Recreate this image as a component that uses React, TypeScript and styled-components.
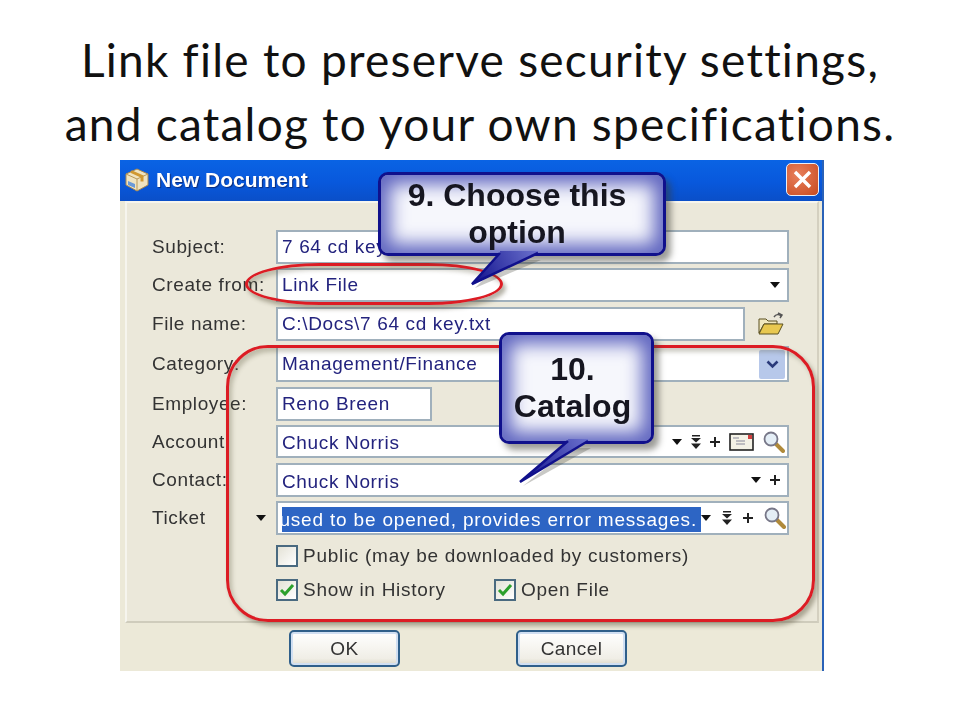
import React from "react";
import styled, { createGlobalStyle } from "styled-components";

const Global = createGlobalStyle`
  html, body { margin: 0; padding: 0; background: #fff; }
  body { width: 960px; height: 720px; overflow: hidden; font-family: "Liberation Sans", Arial, sans-serif; }
`;
const Heading = styled.h1`
  margin: 0; height: 160px; padding-top: 28px; box-sizing: border-box;
  font: 400 46px/64px Lato, "Open Sans", sans-serif; letter-spacing: 1.25px; color: #111; text-align: center; white-space: nowrap;
`;
const Dialog = styled.div`
  position: relative; margin-left: 120px; width: 704px; height: 511px; background: #ece9d8;
  border-right: 2px solid #2a62b8; box-sizing: border-box; overflow: visible; filter: blur(0.45px);
`;
const TitleBar = styled.div`
  height: 41px; display: flex; align-items: center; padding: 0 3px 2px 4px; gap: 5px; box-sizing: border-box;
  background: linear-gradient(#0a63e4 0%, #0858dc 55%, #0a4fc8 100%);
`;
const TitleText = styled.span`
  flex: 1; color: #fff; font: 700 21px "Liberation Sans", Arial, sans-serif; text-shadow: 1px 1px 1px #0a2c7c;
`;
const CloseButton = styled.div`
  width: 33px; height: 33px; border-radius: 5px; border: 1px solid #e8eef8; box-sizing: border-box;
  background: radial-gradient(circle at 35% 35%, #e8805c, #c84a20); display: flex; align-items: center; justify-content: center;
`;
const Panel = styled.div`
  margin: 0 3px 0 5px; height: 422px; background: #ebe8da; padding: 27px 0 0 25px; box-sizing: border-box;
  border-left: 2px solid #f6f5ee; border-top: 2px solid #f6f5ee; border-right: 2px solid #d4d0c0; border-bottom: 2px solid #cfccbc;
`;
const Row = styled.div<{ $mt?: number; $h?: number }>`
  display: flex; align-items: center; margin-top: ${p => p.$mt ?? 0}px; height: ${p => p.$h ?? 34}px;
`;
const Label = styled.div`
  width: 124px; flex: none; font-size: 19px; letter-spacing: .6px; color: #333; display: flex; justify-content: space-between; align-items: center; padding-right: 10px; box-sizing: border-box; white-space: nowrap;
`;
const Field = styled.div<{ $w?: number; $low?: boolean }>`
  width: ${p => p.$w ?? 513}px; height: 100%; flex: none; box-sizing: border-box; background: #fff;
  border: 2px solid #a0b0bc; padding: ${p => p.$low ? "3px" : "0"} 2px 0 4px; display: flex; align-items: center;
  font-size: 19px; letter-spacing: .65px; color: #23237e;
`;
const FieldText = styled.span`
  flex: 1; white-space: nowrap; overflow: hidden;
`;
const Selected = styled.div`
  width: 419px; height: 25px; flex: none; overflow: hidden; background: #2d65c4; color: #fff; display: flex; justify-content: flex-end; align-items: center; white-space: nowrap; padding-right: 4px; box-sizing: border-box; letter-spacing: .82px;
`;
const Tools = styled.div<{ $gap?: number; $pr?: number; $up?: boolean }>`
  display: flex; align-items: center; gap: ${p => p.$gap ?? 9}px; margin-left: auto; padding-right: ${p => p.$pr ?? 0}px;
  ${p => p.$up ? "margin-top: -3px;" : ""}
`;
const Combo = styled.div`
  width: 26px; height: 29px; background: #b7c8ea; border-radius: 2px; display: flex; align-items: center; justify-content: center;
`;
const Side = styled.div`
  margin-left: 13px; display: flex; align-items: center;
`;
const Tick = styled.div`
  width: 22px; height: 22px; box-sizing: border-box; border: 2px solid #4a6a80; background: linear-gradient(135deg, #e4e2d6, #fff); display: flex; align-items: center; justify-content: center; flex: none;
`;
const CheckRow = styled.div<{ $mt: number }>`
  display: flex; align-items: center; margin: ${p => p.$mt}px 0 0 124px; height: 22px; font-size: 19px; letter-spacing: .72px; color: #333;
`;
const CheckLabel = styled.label<{ $w?: number }>`
  display: flex; align-items: center; gap: 5px; white-space: nowrap; ${p => p.$w ? `width: ${p.$w}px;` : ""}
`;
const Footer = styled.div`
  display: flex; padding: 7px 0 0 169px; gap: 116px;
`;
const Btn = styled.div`
  width: 111px; height: 37px; box-sizing: border-box; border: 2px solid #2f5f8a; border-radius: 5px; color: #333;
  background: linear-gradient(#fff, #f0eee6 80%, #dcd8c8); box-shadow: inset 0 0 0 2px #d0dff2;
  display: flex; align-items: center; justify-content: center; font-size: 19px; letter-spacing: .4px;
`;
const Ring = styled.div<{ $x: number; $y: number; $w: number; $h: number; $r: string; $bw: number }>`
  position: absolute; left: ${p => p.$x}px; top: ${p => p.$y}px; width: ${p => p.$w}px; height: ${p => p.$h}px;
  box-sizing: border-box; border: ${p => p.$bw}px solid #dc1c24; border-radius: ${p => p.$r};
  box-shadow: 3px 4px 4px rgba(90,85,60,.45), inset 3px 4px 4px rgba(90,85,60,.3);
`;
const Callout = styled.div<{ $x: number; $y: number; $w: number; $h: number; $pr: number }>`
  position: absolute; left: ${p => p.$x}px; top: ${p => p.$y}px; width: ${p => p.$w}px; height: ${p => p.$h}px; box-sizing: border-box;
  padding-right: ${p => p.$pr}px;
  border: 3px solid #10108c; border-radius: 10px; background: #f6f7fc;
  box-shadow: inset 0 0 18px 9px #6066c0, 5px 6px 6px rgba(60,60,50,.5);
  display: flex; flex-direction: column; align-items: center; justify-content: center;
  font-weight: 700; font-size: 32px; line-height: 37px; color: #161620; text-align: center; white-space: nowrap;
`;
const TailSvg = styled.svg`
  position: absolute; overflow: visible; left: 0; top: 0;
`;

const Tail = ({ id, a, tip, b, y }: { id: string; a: number; tip: [number, number]; b: number; y: number }) => (
  <TailSvg width="1" height="1">
    <defs>
      <linearGradient id={id} gradientUnits="userSpaceOnUse" x1={b} y1={y} x2={tip[0]} y2={tip[1]}>
        <stop offset="0" stopColor="#6a70cc" />
        <stop offset="1" stopColor="#10108c" />
      </linearGradient>
    </defs>
    <path d={`M${a} ${y + 3}L${tip[0]} ${tip[1]}L${b} ${y + 3}Z`} fill="rgba(60,60,50,.28)" transform="translate(3 4)" />
    <path d={`M${a} ${y - 2}V${y}L${tip[0]} ${tip[1]}L${b} ${y}V${y - 2}Z`} fill={`url(#${id})`} />
    <path d={`M${a} ${y}L${tip[0]} ${tip[1]}L${b} ${y}`} fill="none" stroke="#10108c" strokeWidth="2.500" />
  </TailSvg>
);

const Tri = () => <svg width="10" height="6" viewBox="0 0 10 6"><path d="M0 0h10L5 6z" fill="#111" /></svg>;
const Dbl = () => <svg width="10" height="14" viewBox="0 0 10 14"><path d="M1 0h8v1.500H1zM0 3h10L5 7.500zM0 8.500h10L5 14z" fill="#222" /></svg>;
const Plus = () => <svg width="10" height="10" viewBox="0 0 10 10"><path d="M4 0h2v4h4v2H6v4H4V6H0V4h4z" fill="#222" /></svg>;
const Lens = () => (
  <svg width="22" height="22" viewBox="0 0 22 22">
    <path d="M12 12l8 8" stroke="#b08a3a" strokeWidth="4" strokeLinecap="round" />
    <circle cx="8" cy="8" r="6.500" fill="#e4eef6" stroke="#778" strokeWidth="1.800" />
  </svg>
);
const Card = () => (
  <svg width="25" height="18" viewBox="0 0 25 18">
    <rect x="1" y="1" width="23" height="16" fill="#f4f2e6" stroke="#222" strokeWidth="1.600" />
    <path d="M4 5h6M7 8h9M7 11h9" stroke="#889" strokeWidth="1.200" />
    <rect x="19" y="2" width="4" height="4" fill="#d04040" />
  </svg>
);
const Check = () => (
  <svg width="16" height="14" viewBox="0 0 16 14"><path d="M2 7l4 4 8-9" fill="none" stroke="#2ca02c" strokeWidth="3" /></svg>
);

export default function App() {
  return (
    <>
      <Global />
      <Heading>Link file to preserve security settings,<br />and catalog to your own specifications.</Heading>
      <Dialog>
        <TitleBar>
          <svg width="27" height="27" viewBox="0 0 27 27">
            <path d="M13 3l11 5v11l-11 6-11-6V8z" fill="#f0e4c0" stroke="#a88850" />
            <path d="M2 8l11 5 11-5M13 13v12" fill="none" stroke="#b89858" />
            <path d="M7 5.500l11 5v5" fill="none" stroke="#d09830" strokeWidth="3" />
            <path d="M4 15l7 3v4l-7-3z" fill="#6a9ad8" />
          </svg>
          <TitleText>New Document</TitleText>
          <CloseButton>
            <svg width="19" height="19" viewBox="0 0 19 19"><path d="M2 2l15 15M17 2L2 17" stroke="#fff" strokeWidth="3.400" /></svg>
          </CloseButton>
        </TitleBar>
        <Panel>
          <Row><Label>Subject:</Label><Field><FieldText>7 64 cd key</FieldText></Field></Row>
          <Row $mt={4}><Label>Create from:</Label><Field><FieldText>Link File</FieldText><Tools $pr={5}><Tri /></Tools></Field></Row>
          <Row $mt={5}><Label>File name:</Label><Field $w={469}><FieldText>C:\Docs\7 64 cd key.txt</FieldText></Field>
            <Side>
              <svg width="26" height="24" viewBox="0 0 26 24">
                <path d="M1 7h7l2 2h9v3H6L1 21z" fill="#f0e8c0" stroke="#5a5020" />
                <path d="M1 22l5-10h19l-5 10z" fill="#e8c850" stroke="#5a5020" />
                <path d="M16 5c2-3 5-3 7-1" fill="none" stroke="#555" strokeWidth="1.500" />
                <path d="M20 1l4 2-2 3" fill="none" stroke="#555" strokeWidth="1.500" />
              </svg>
            </Side>
          </Row>
          <Row $mt={5} $h={36}><Label>Category:</Label><Field><FieldText>Management/Finance</FieldText><Tools><Combo>
            <svg width="13" height="9" viewBox="0 0 13 9"><path d="M1.500 1.500l5 5 5-5" fill="none" stroke="#2a3a7a" strokeWidth="2.600" /></svg>
          </Combo></Tools></Field></Row>
          <Row $mt={5}><Label>Employee:</Label><Field $w={156}><FieldText>Reno Breen</FieldText></Field></Row>
          <Row $mt={4} $h={33}><Label>Account:</Label><Field $low><FieldText>Chuck Norris</FieldText><Tools $up><Tri /><Dbl /><Plus /><Card /><Lens /></Tools></Field></Row>
          <Row $mt={5}><Label>Contact:</Label><Field $low><FieldText>Chuck Norris</FieldText><Tools $pr={5} $up><Tri /><Plus /></Tools></Field></Row>
          <Row $mt={4}><Label>Ticket<Tri /></Label><Field $low><Selected>used to be opened, provides error messages.</Selected><Tools $gap={11} $up><Tri /><Dbl /><Plus /><Lens /></Tools></Field></Row>
          <CheckRow $mt={10}><CheckLabel><Tick />Public (may be downloaded by customers)</CheckLabel></CheckRow>
          <CheckRow $mt={12}><CheckLabel $w={218}><Tick><Check /></Tick>Show in History</CheckLabel><CheckLabel><Tick><Check /></Tick>Open File</CheckLabel></CheckRow>
        </Panel>
        <Footer><Btn>OK</Btn><Btn>Cancel</Btn></Footer>

        <Ring $x={125} $y={103} $w={258} $h={42} $r="75px / 21px" $bw={3} />
        <Ring $x={106} $y={185} $w={589} $h={277} $r="42px" $bw={3} />

        <Callout $x={258} $y={12} $w={288} $h={84} $pr={10}>
          9. Choose this<br />option
          <Tail id="t9" a={119} tip={[91, 109]} b={157} y={78} />
        </Callout>
        <Callout $x={379} $y={172} $w={155} $h={112} $pr={8}>
          10.<br />Catalog
          <Tail id="t10" a={66} tip={[18, 147]} b={86} y={106} />
        </Callout>
      </Dialog>
    </>
  );
}
